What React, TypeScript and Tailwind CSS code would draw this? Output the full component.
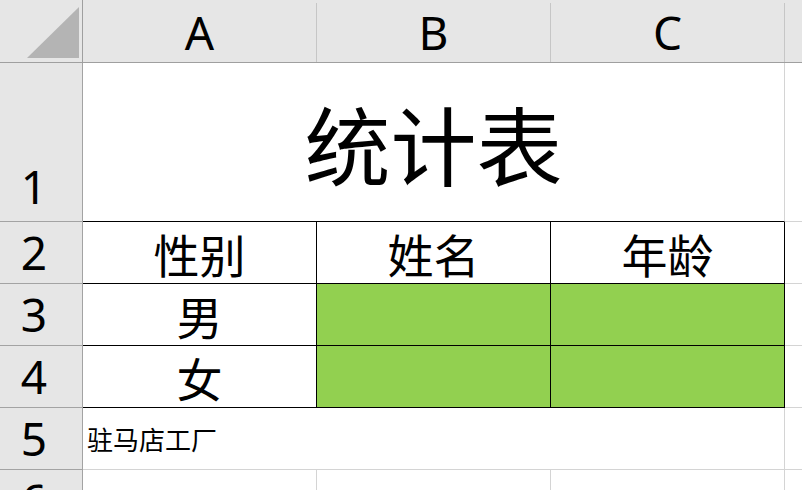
import React from "react";

const font = "font-['Noto_Sans','Noto_Sans_CJK_SC',sans-serif]";

function ColHeader({ label, last }: { label?: string; last?: boolean }) {
  return (
    <div className="flex bg-[#e6e6e6] border-b border-[#9f9f9f]">
      <div className="flex-1 flex items-center justify-center text-[46px] leading-none text-black pt-[2px]">
        {label}
      </div>
      {!last && <div className="w-px mt-[3px] bg-[#c6c6c6]" />}
    </div>
  );
}

function RowHeader({ n }: { n: number }) {
  return (
    <div className="flex items-end justify-center pr-[14px] pb-[8px] bg-[#e6e6e6] border-r border-b border-[#a3a3a3] text-[46px] leading-none text-black">
      {n}
    </div>
  );
}

export default function App() {
  return (
    <div className={`w-[802px] h-[490px] overflow-hidden bg-white ${font}`}>
      <div className="grid grid-cols-[83px_234px_234px_234px_1fr] grid-rows-[63px_159px_62px_62px_62px_62px_62px]">
        {/* header row */}
        <div className="flex items-end justify-end bg-[#e6e6e6] border-r border-b border-[#9f9f9f] pr-[3px] pb-[4px]">
          <svg width="52" height="51" viewBox="0 0 52 51">
            <polygon points="0,51 52,51 52,0" fill="#b4b4b4" />
          </svg>
        </div>
        <ColHeader label="A" />
        <ColHeader label="B" />
        <ColHeader label="C" />
        <ColHeader last />

        {/* row 1 */}
        <div className="flex items-end justify-center pr-[14px] pb-[12px] bg-[#e6e6e6] border-r border-b border-[#a3a3a3] text-[46px] leading-none text-black">
          1
        </div>
        <div className="col-span-3 flex items-center justify-center pt-[10px] border-r border-[#d4d4d4] border-b-black border-b text-[86px] leading-none text-black">
          统计表
        </div>
        <div className="border-b border-[#d4d4d4]" />

        {/* row 2 */}
        <RowHeader n={2} />
        {["性别", "姓名", "年龄"].map((t) => (
          <div
            key={t}
            className="flex items-center justify-center pt-[4px] border-r border-b border-black text-[46px] leading-none text-black"
          >
            {t}
          </div>
        ))}
        <div className="border-b border-[#d4d4d4]" />

        {/* row 3 */}
        <RowHeader n={3} />
        <div className="flex items-center justify-center pt-[4px] border-r border-b border-black text-[46px] leading-none text-black">
          男
        </div>
        <div className="bg-[#92d050] border-r border-b border-black" />
        <div className="bg-[#92d050] border-r border-b border-black" />
        <div className="border-b border-[#d4d4d4]" />

        {/* row 4 */}
        <RowHeader n={4} />
        <div className="flex items-center justify-center pt-[4px] border-r border-b border-black text-[46px] leading-none text-black">
          女
        </div>
        <div className="bg-[#92d050] border-r border-b border-black" />
        <div className="bg-[#92d050] border-r border-b border-black" />
        <div className="border-b border-[#d4d4d4]" />

        {/* row 5 */}
        <RowHeader n={5} />
        <div className="col-span-3 flex items-center pl-[4px] pt-[3px] border-r border-b border-[#d4d4d4] text-[26px] leading-none text-black">
          驻马店工厂
        </div>
        <div className="border-b border-[#d4d4d4]" />

        {/* row 6 */}
        <RowHeader n={6} />
        <div className="border-r border-b border-[#d4d4d4]" />
        <div className="border-r border-b border-[#d4d4d4]" />
        <div className="border-r border-b border-[#d4d4d4]" />
        <div className="border-b border-[#d4d4d4]" />
      </div>
    </div>
  );
}
